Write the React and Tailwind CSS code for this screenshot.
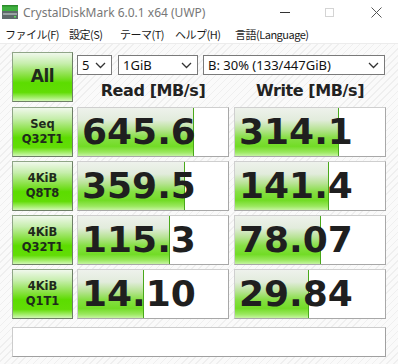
import React from "react";

const rows = [
  { l1: "Seq", l2: "Q32T1", read: "645.6", readW: 116, write: "314.1", writeW: 104 },
  { l1: "4KiB", l2: "Q8T8", read: "359.5", readW: 107, write: "141.4", writeW: 94 },
  { l1: "4KiB", l2: "Q32T1", read: "115.3", readW: 92, write: "78.07", writeW: 86 },
  { l1: "4KiB", l2: "Q1T1", read: "14.10", readW: 66, write: "29.84", writeW: 74 },
];

const Chevron = () => (
  <svg width="11" height="7" viewBox="0 0 11 7" className="shrink-0">
    <path d="M1 1l4.5 4.5L10 1" fill="none" stroke="#333" strokeWidth="1.3" />
  </svg>
);

const Select = ({ value, className }) => (
  <div
    className={`flex items-center justify-between h-[20px] pl-[4px] pr-[5px] bg-white border border-[#7a7a7a] text-[13px] text-[#111] ${className}`}
  >
    <span className="leading-none">{value}</span>
    <Chevron />
  </div>
);

const GreenButton = ({ children, className }) => (
  <div
    className={`flex flex-col items-center justify-center w-[61px] border border-[#8fa587] border-b-[#6d7f66] border-r-[#6d7f66] bg-[linear-gradient(to_bottom,#f0f8ec_0%,#c6eeac_22%,#84e03c_48%,#5cdc00_62%,#62dd06_82%,#a4ee6c_93%,#d2f8b6_100%)] text-[#1f2a1c] font-bold font-['DejaVu_Sans',sans-serif] ${className}`}
  >
    {children}
  </div>
);

const Cell = ({ value, width }) => (
  <div className="relative w-[152px] h-[50px] bg-white border border-[#cfcfcf] border-b-[#a8a8a8] border-r-[#a8a8a8] overflow-hidden">
    <div
      className="absolute left-0 top-0 bottom-0 border-r border-[#49a81a] bg-[linear-gradient(to_bottom,#eef2ec_0%,#e2ecdc_25%,#b6e392_45%,#86df44_62%,#72dc26_80%,#9ae85e_92%,#c6f4a2_100%)]"
      style={{ width: width }}
    />
    <div className="relative h-full flex items-center pl-[4px] text-[36px] leading-none font-bold text-[#1f1f1f] font-['DejaVu_Sans',sans-serif]">
      {value}
    </div>
  </div>
);

export default function App() {
  return (
    <div className="w-[398px] h-[364px] overflow-hidden bg-white font-['Noto_Sans','Noto_Sans_CJK_JP',sans-serif]">
      {/* title bar */}
      <div className="flex items-center h-[25px]">
        <svg width="16" height="14" viewBox="0 0 16 14" className="ml-[2px] mt-[-1px]">
          <rect x="0" y="0" width="16" height="6" fill="#3fb03f" />
          <rect x="0" y="0" width="16" height="1.5" fill="#2c8a2c" />
          <rect x="0" y="6" width="16" height="8" fill="#5f6a6a" />
          <rect x="1" y="8" width="14" height="2" fill="#9aa4a4" />
          <rect x="12" y="11" width="2" height="1.5" fill="#5fe05f" />
        </svg>
        <span className="ml-[5px] text-[12px] text-[#777]">CrystalDiskMark 6.0.1 x64 (UWP)</span>
        <div className="ml-auto flex items-center">
          <div className="w-[10px] h-px bg-[#333] mr-[35px]" />
          <div className="w-[9px] h-[9px] border border-[#d4d4d4] mr-[37px]" />
          <svg width="11" height="11" viewBox="0 0 11 11" className="mr-[16px]">
            <path d="M0.5 0.5l10 10M10.5 0.5l-10 10" stroke="#555" strokeWidth="1" />
          </svg>
        </div>
      </div>

      {/* menu bar */}
      <div className="flex items-center h-[18px] pl-[5px] text-[11px] tracking-[-0.5px] text-[#1a1a1a] font-['Noto_Sans_CJK_JP',sans-serif]">
        <span className="w-[64px]">ファイル(F)</span>
        <span className="w-[51px]">設定(S)</span>
        <span className="w-[55px]">テーマ(T)</span>
        <span className="w-[60px]">ヘルプ(H)</span>
        <span>言語(Language)</span>
      </div>

      {/* main */}
      <div className="h-[321px] border-t border-[#ececec] pt-[8px] pl-[12px] bg-[repeating-linear-gradient(135deg,#fafafa_0px,#fafafa_4px,#efefef_4px,#efefef_5px)]">
        <div className="flex gap-1">
          <GreenButton className="h-[50px] text-[17px] tracking-[-0.5px]">All</GreenButton>
          <div className="flex flex-col">
            <div className="flex mt-[3px]">
              <Select value="5" className="w-[35px]" />
              <Select value="1GiB" className="w-[80px] ml-[6px]" />
              <Select value="B: 30% (133/447GiB)" className="w-[182px] ml-[5px]" />
            </div>
            <div className="flex mt-[4px] text-[16px] font-bold text-[#222] tracking-[-0.4px] font-['DejaVu_Sans',sans-serif]">
              <div className="w-[152px] text-center">Read [MB/s]</div>
              <div className="w-[152px] ml-[5px] text-center">Write [MB/s]</div>
            </div>
          </div>
        </div>

        <div className="flex flex-col gap-1 mt-[4px]">
          {rows.map((r, i) => (
            <div key={i} className="flex">
              <GreenButton className="h-[50px] text-[11.5px] leading-[15px]">
                <span>{r.l1}</span>
                <span>{r.l2}</span>
              </GreenButton>
              <div className="ml-[4px]">
                <Cell value={r.read} width={r.readW} />
              </div>
              <div className="ml-[5px]">
                <Cell value={r.write} width={r.writeW} />
              </div>
            </div>
          ))}
        </div>

        <div className="mt-[8px] w-[374px] h-[30px] bg-white border border-[#cccccc] border-b-[#a0a0a0] border-r-[#a0a0a0]" />
      </div>
    </div>
  );
}
